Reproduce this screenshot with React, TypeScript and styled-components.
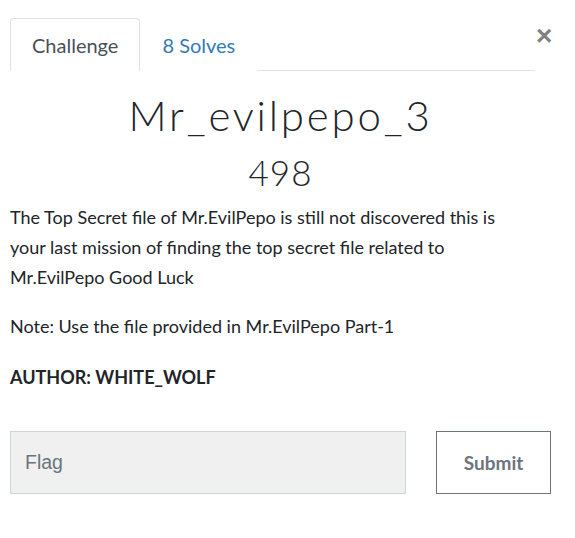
import React from "react";
import styled, { createGlobalStyle } from "styled-components";

const Global = createGlobalStyle`
  html, body { margin: 0; padding: 0; background: #fff; }
  body { font-family: "Lato", "Noto Sans", sans-serif; color: #212529; }
  * { box-sizing: border-box; }
`;

const Page = styled.div`
  width: 575px;
  padding: 18px 24px 0 10px;
`;

const Header = styled.div`
  display: flex;
  align-items: flex-start;
`;

const TabList = styled.div`
  flex: 1;
  display: flex;
  border-bottom: 1px solid #dee2e6;
  margin-right: 1px;
`;

const Tab = styled.div<{ $active?: boolean }>`
  height: 53px;
  padding: 0 21px;
  display: flex;
  align-items: center;
  font-size: 20px;
  margin-bottom: -1px;
  border: 1px solid ${(p) => (p.$active ? "#dee2e6" : "transparent")};
  border-bottom-color: ${(p) => (p.$active ? "#fff" : "transparent")};
  border-radius: 4px 4px 0 0;
  background: #fff;
  color: ${(p) => (p.$active ? "#495057" : "#337ab7")};
`;

const Close = styled.div`
  width: 15px;
  margin-top: 7px;
  font-family: "Liberation Sans", Arial, sans-serif;
  font-size: 28px;
  font-weight: 700;
  line-height: 22px;
  color: #808080;
`;

const Title = styled.h2`
  margin: 21px 0 0;
  text-align: center;
  font-weight: 300;
  font-size: 42px;
  line-height: 46px;
  letter-spacing: 2.8px;
  color: #212529;
`;

const Value = styled.h3`
  margin: 14px 0 0;
  text-align: center;
  font-weight: 300;
  font-size: 35px;
  line-height: 40px;
  letter-spacing: 1px;
  color: #212529;
`;

const Description = styled.div`
  width: 522px;
`;

const Para = styled.p<{ $gap?: number; $bold?: boolean }>`
  margin: ${(p) => p.$gap ?? 19}px 0 0;
  font-size: 18px;
  line-height: 30px;
  font-weight: ${(p) => (p.$bold ? 700 : 400)};
  color: #212529;
`;

const Form = styled.form`
  display: flex;
  gap: 30px;
  margin-top: 39px;
`;

const Input = styled.input`
  width: 397px;
  height: 63px;
  padding: 0 14px;
  background: #f0f0f0;
  border: 1px solid #ced4da;
  font-family: "Liberation Sans", Arial, sans-serif;
  font-size: 19.5px;
  color: #495057;
  &::placeholder { color: #6c757d; }
`;

const Submit = styled.button`
  width: 115px;
  height: 63px;
  background: #fff;
  border: 1px solid #6c757d;
  font-family: "Lato", sans-serif;
  font-weight: 700;
  font-size: 19px;
  color: #6c757d;
`;

export default function App() {
  return (
    <>
      <Global />
      <Page>
        <Header>
          <TabList>
            <Tab $active>Challenge</Tab>
            <Tab>8 Solves</Tab>
          </TabList>
          <Close>×</Close>
        </Header>
        <Title>Mr_evilpepo_3</Title>
        <Value>498</Value>
        <Description>
          <Para $gap={10}>
            The Top Secret file of Mr.EvilPepo is still not discovered this is your last mission of
            finding the top secret file related to Mr.EvilPepo Good Luck
          </Para>
          <Para>Note: Use the file provided in Mr.EvilPepo Part-1</Para>
          <Para $gap={21} $bold>AUTHOR: WHITE_WOLF</Para>
        </Description>
        <Form onSubmit={(e) => e.preventDefault()}>
          <Input placeholder="Flag" />
          <Submit type="submit">Submit</Submit>
        </Form>
      </Page>
    </>
  );
}
